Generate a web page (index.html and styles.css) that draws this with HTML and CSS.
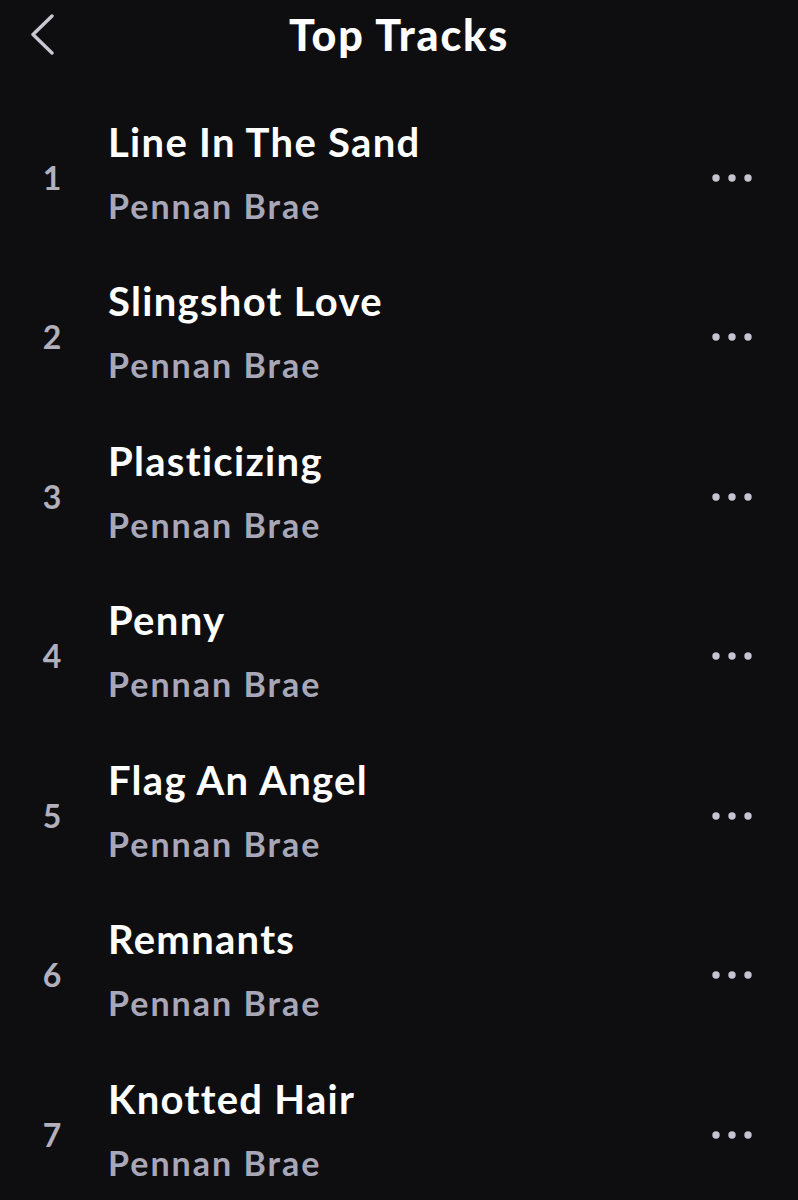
FILE: index.html
```html
<!DOCTYPE html>
<html lang="en">

<head>
  <meta charset="UTF-8">
  <title>Top Tracks</title>
  <link rel="stylesheet" href="styles.css">
</head>

<body>
  <div class="header">
    <a href="#" class="back">
      <svg width="24" height="44" viewBox="0 0 24 44">
        <polyline points="21,3 2,21.5 21,40" fill="none" stroke="#c9c8d2" stroke-width="3.4" stroke-linecap="round" stroke-linejoin="round" />
      </svg>
    </a>
    <h1>Top Tracks</h1>
    <div></div>
  </div>

  <div class="tracks">
    <div class="track">
      <div class="num">1</div>
      <div class="info">
        <div class="title">Line In The Sand</div>
        <div class="artist">Pennan Brae</div>
      </div>
      <svg class="more" width="42" height="10" viewBox="0 0 42 10"><circle cx="4" cy="5" r="3.7" /><circle cx="20" cy="5" r="3.7" /><circle cx="36" cy="5" r="3.7" /></svg>
    </div>
    <div class="track">
      <div class="num">2</div>
      <div class="info">
        <div class="title">Slingshot Love</div>
        <div class="artist">Pennan Brae</div>
      </div>
      <svg class="more" width="42" height="10" viewBox="0 0 42 10"><circle cx="4" cy="5" r="3.7" /><circle cx="20" cy="5" r="3.7" /><circle cx="36" cy="5" r="3.7" /></svg>
    </div>
    <div class="track">
      <div class="num">3</div>
      <div class="info">
        <div class="title">Plasticizing</div>
        <div class="artist">Pennan Brae</div>
      </div>
      <svg class="more" width="42" height="10" viewBox="0 0 42 10"><circle cx="4" cy="5" r="3.7" /><circle cx="20" cy="5" r="3.7" /><circle cx="36" cy="5" r="3.7" /></svg>
    </div>
    <div class="track">
      <div class="num">4</div>
      <div class="info">
        <div class="title">Penny</div>
        <div class="artist">Pennan Brae</div>
      </div>
      <svg class="more" width="42" height="10" viewBox="0 0 42 10"><circle cx="4" cy="5" r="3.7" /><circle cx="20" cy="5" r="3.7" /><circle cx="36" cy="5" r="3.7" /></svg>
    </div>
    <div class="track">
      <div class="num">5</div>
      <div class="info">
        <div class="title">Flag An Angel</div>
        <div class="artist">Pennan Brae</div>
      </div>
      <svg class="more" width="42" height="10" viewBox="0 0 42 10"><circle cx="4" cy="5" r="3.7" /><circle cx="20" cy="5" r="3.7" /><circle cx="36" cy="5" r="3.7" /></svg>
    </div>
    <div class="track">
      <div class="num">6</div>
      <div class="info">
        <div class="title">Remnants</div>
        <div class="artist">Pennan Brae</div>
      </div>
      <svg class="more" width="42" height="10" viewBox="0 0 42 10"><circle cx="4" cy="5" r="3.7" /><circle cx="20" cy="5" r="3.7" /><circle cx="36" cy="5" r="3.7" /></svg>
    </div>
    <div class="track">
      <div class="num">7</div>
      <div class="info">
        <div class="title">Knotted Hair</div>
        <div class="artist">Pennan Brae</div>
      </div>
      <svg class="more" width="42" height="10" viewBox="0 0 42 10"><circle cx="4" cy="5" r="3.7" /><circle cx="20" cy="5" r="3.7" /><circle cx="36" cy="5" r="3.7" /></svg>
    </div>
  </div>
</body>

</html>
```

FILE: styles.css
```css
html,
body {
  height: 100%;
}

body {
  margin: 0;
  background: #0e0e11;
  font-family: "Lato", "Noto Sans", sans-serif;
  color: #FFF;
  overflow: hidden;
}

.header {
  display: grid;
  grid-template-columns: 104px 1fr 104px;
  align-items: center;
  height: 70px;
  margin-bottom: 28px;
}

.back {
  display: flex;
  padding-left: 31px;
}

h1 {
  margin: 0;
  text-align: center;
  font-size: 43px;
  font-weight: 900;
  line-height: 70px;
  letter-spacing: 1.8px;
}

.track {
  display: grid;
  grid-template-columns: 104px 1fr auto;
  align-items: center;
  height: 159.5px;
  padding-right: 44px;
}

.num {
  text-align: center;
  font-size: 32px;
  font-weight: 700;
  line-height: 32px;
  color: #b1b0bc;
}

.info {
  display: flex;
  flex-direction: column;
  gap: 8px;
  padding-left: 4px;
  padding-bottom: 8px;
}

.title {
  font-size: 40px;
  font-weight: 700;
  line-height: 56px;
  letter-spacing: 1.3px;
}

.artist {
  font-size: 34px;
  font-weight: 700;
  line-height: 56px;
  letter-spacing: 2px;
  color: #a8a7b7;
}

.more {
  fill: #c5c4d1;
}
```
